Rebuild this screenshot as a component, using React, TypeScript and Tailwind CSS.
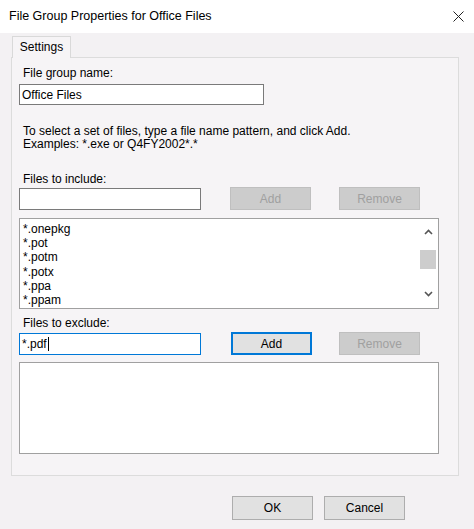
import React from 'react';

// File Group Properties dialog (Windows 10 look)

const includePatterns = ['*.onepkg', '*.pot', '*.potm', '*.potx', '*.ppa', '*.ppam'];

function Chevron({ up }: { up?: boolean }) {
  return (
    <svg width="9" height="6" viewBox="0 0 9 6" className="block">
      <path
        d={up ? 'M1 5 L4.5 1.5 L8 5' : 'M1 1 L4.5 4.5 L8 1'}
        fill="none"
        stroke="#555"
        strokeWidth="1.6"
      />
    </svg>
  );
}

function DisabledButton({ label }: { label: string }) {
  return (
    <div className="flex h-[23px] w-[81px] items-center justify-center border border-[#bfbfbf] bg-[#cccccc] text-[#a0a0a0]">
      {label}
    </div>
  );
}

export default function App() {
  return (
    <div
      className="flex h-[529px] w-[474px] flex-col bg-white text-[12px] text-black"
      style={{ fontFamily: '"Liberation Sans", Arial, sans-serif' }}
    >
      {/* Title bar */}
      <div className="flex h-[33px] items-center justify-between bg-white pl-[9px] pr-[8px]">
        <span className="text-[12.5px]">File Group Properties for Office Files</span>
        <svg width="11" height="11" viewBox="0 0 11 11" className="mr-[2px]">
          <path d="M0.5 0.5 L10.5 10.5 M10.5 0.5 L0.5 10.5" stroke="#222" strokeWidth="1" />
        </svg>
      </div>

      {/* Body */}
      <div className="flex flex-1 flex-col bg-[#f3f1f3] pl-[11px] pr-[15px]">
        {/* Tab */}
        <div className="relative z-10 mt-[3px] -mb-px ml-px flex h-[22px] w-[59px] items-center justify-center border border-b-0 border-[#d9d9d9] bg-[#f6f4f6] pb-px">
          Settings
        </div>

        {/* Tab page */}
        <div className="flex h-[419px] flex-col border border-[#dcdcdc] bg-[#f6f4f6] pl-[7px]">
          <div className="ml-[4px] mt-[7px] leading-[16px]">File group name:</div>
          <div className="mt-[3px] flex h-[21px] w-[245px] items-center border border-[#7a7a7a] bg-white pl-[2px]">
            Office Files
          </div>

          <div className="ml-[4px] mt-[20px] leading-[13px]">
            <div>To select a set of files, type a file name pattern, and click Add.</div>
            <div>Examples: *.exe or Q4FY2002*.*</div>
          </div>

          <div className="ml-[4px] mt-[20px] leading-[16px]">Files to include:</div>
          <div className="flex items-center">
            <div className="h-[22px] w-[182px] border border-[#7a7a7a] bg-white" />
            <div className="ml-[29px]">
              <DisabledButton label="Add" />
            </div>
            <div className="ml-[28px]">
              <DisabledButton label="Remove" />
            </div>
          </div>

          <div className="mt-[8px] flex h-[91px] w-[420px] border border-[#a0a0a0] bg-white">
            <div className="flex-1 pl-[3px] pt-[3px] leading-[14.2px]">
              {includePatterns.map(p => (
                <div key={p}>{p}</div>
              ))}
            </div>
            <div className="mr-px flex w-[18px] flex-col items-center pt-[10px]">
              <Chevron up />
              <div className="mt-[15px] h-[19px] w-[16px] bg-[#cdcdcd]" />
              <div className="mt-[22px]">
                <Chevron />
              </div>
            </div>
          </div>

          <div className="ml-[4px] mt-[6px] leading-[16px]">Files to exclude:</div>
          <div className="mt-[1px] flex items-center">
            <div className="flex h-[22px] w-[182px] items-center border border-[#0078d7] bg-white pl-[2px]">
              *.pdf<span className="ml-px inline-block h-[14px] w-px bg-black" />
            </div>
            <div className="ml-[30px] flex h-[23px] w-[81px] items-center justify-center border-2 border-[#0078d7] bg-[#e1e1e1]">
              Add
            </div>
            <div className="ml-[27px]">
              <DisabledButton label="Remove" />
            </div>
          </div>

          <div className="mt-[7px] h-[92px] w-[420px] border border-[#a0a0a0] bg-white" />
        </div>

        {/* Dialog buttons */}
        <div className="mt-[20px] flex">
          <div className="ml-[221px] flex h-[24px] w-[81px] items-center justify-center border border-[#adadad] bg-[#e1e1e1]">
            OK
          </div>
          <div className="ml-[11px] flex h-[24px] w-[81px] items-center justify-center border border-[#adadad] bg-[#e1e1e1]">
            Cancel
          </div>
        </div>
      </div>
    </div>
  );
}
